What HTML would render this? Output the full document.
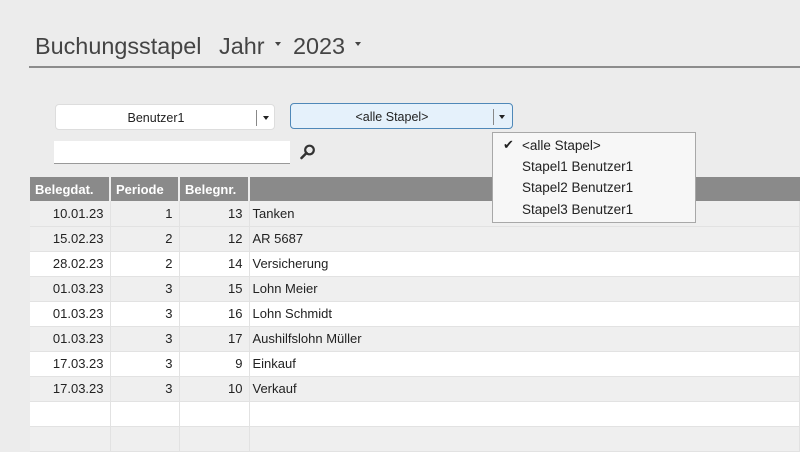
<!DOCTYPE html>
<html><head><meta charset="utf-8"><style>
*{margin:0;padding:0;box-sizing:border-box}
body{width:800px;height:449px;background:#ececec;position:relative;overflow:hidden;font-family:"Liberation Sans",sans-serif;color:#222}
.t{position:absolute;top:33px;font-size:23.4px;color:#444;white-space:nowrap}
.tri{display:inline-block;width:0;height:0;border-left:3.5px solid transparent;border-right:3.5px solid transparent;border-top:4px solid #444;vertical-align:middle;margin-left:10px;position:relative;top:-4px}
.hr{position:absolute;left:29px;right:0;top:66px;height:2px;background:#8c8c8c}
.cb{position:absolute;height:26px;border-radius:4px;font-size:12.5px;line-height:26px;text-align:center}
.cb .d{position:absolute;top:5px;width:1px;height:16px;background:#888}
.cb .a{position:absolute;top:11px;width:0;height:0;border-left:3.5px solid transparent;border-right:3.5px solid transparent;border-top:4px solid #222}
table{position:absolute;left:30px;top:177px;border-collapse:collapse;width:770px;font-size:13px;table-layout:fixed}
th{background:#8a8a8a;color:#fff;font-weight:bold;height:24px;text-align:left;padding:0 5px;border-right:2px solid #ececec;font-size:13px}
td{height:25px;border-right:1px solid #e2e2e2;border-bottom:1px solid #e2e2e2;padding:0 6px;white-space:nowrap}
td.r{text-align:right}
td:nth-child(4){padding-left:3px}
tr.g td{background:#efefef}
tr.w td{background:#fff}
.dd{position:absolute;left:492px;top:132px;width:204px;height:91px;background:#f7f7f7;border:1px solid #a8a8a8;font-size:13.5px}
.dd div{position:absolute;left:29px;white-space:nowrap}
</style></head><body>
<div class="t" style="left:35px">Buchungsstapel</div>
<div class="t" style="left:219px">Jahr<span class="tri"></span></div>
<div class="t" style="left:293px">2023<span class="tri"></span></div>
<div class="hr"></div>
<div class="cb" style="left:55px;top:104px;width:220px;background:#fff;border:1px solid #ddd"><span style="position:absolute;left:0;width:200px">Benutzer1</span><span class="d" style="left:200px"></span><span class="a" style="left:207px"></span></div>
<div class="cb" style="left:290px;top:103px;width:223px;background:#e5f1fb;border:1px solid #4f88b8"><span style="position:absolute;left:0;width:202px">&lt;alle Stapel&gt;</span><span class="d" style="left:202px"></span><span class="a" style="left:208px"></span></div>
<div style="position:absolute;left:54px;top:141px;width:236px;height:23px;background:#fff;border-bottom:1px solid #999"></div>
<svg style="position:absolute;left:299px;top:143px" width="18" height="18" viewBox="0 0 18 18"><circle cx="10.5" cy="7" r="4.3" fill="none" stroke="#333" stroke-width="2.2"/><line x1="7.5" y1="10" x2="2.5" y2="15" stroke="#333" stroke-width="2.6" stroke-linecap="round"/></svg>
<table>
<colgroup><col style="width:80px"><col style="width:69px"><col style="width:70px"><col></colgroup>
<tr><th>Belegdat.</th><th>Periode</th><th>Belegnr.</th><th style="border-right:0"></th></tr>
<tr class="g"><td class="r">10.01.23</td><td class="r">1</td><td class="r">13</td><td>Tanken</td></tr>
<tr class="g"><td class="r">15.02.23</td><td class="r">2</td><td class="r">12</td><td>AR 5687</td></tr>
<tr class="w"><td class="r">28.02.23</td><td class="r">2</td><td class="r">14</td><td>Versicherung</td></tr>
<tr class="g"><td class="r">01.03.23</td><td class="r">3</td><td class="r">15</td><td>Lohn Meier</td></tr>
<tr class="w"><td class="r">01.03.23</td><td class="r">3</td><td class="r">16</td><td>Lohn Schmidt</td></tr>
<tr class="g"><td class="r">01.03.23</td><td class="r">3</td><td class="r">17</td><td>Aushilfslohn Müller</td></tr>
<tr class="w"><td class="r">17.03.23</td><td class="r">3</td><td class="r">9</td><td>Einkauf</td></tr>
<tr class="g"><td class="r">17.03.23</td><td class="r">3</td><td class="r">10</td><td>Verkauf</td></tr>
<tr class="w"><td></td><td></td><td></td><td></td></tr>
<tr class="g"><td></td><td></td><td></td><td></td></tr>
</table>
<div style="position:absolute;left:679px;top:181px;color:#fff;font-weight:bold;font-size:13px">kt</div>
<div class="dd">
<span style="position:absolute;left:10px;top:4px;font-size:13px">✔</span>
<div style="top:5px">&lt;alle Stapel&gt;</div>
<div style="top:26px">Stapel1 Benutzer1</div>
<div style="top:47px">Stapel2 Benutzer1</div>
<div style="top:69px">Stapel3 Benutzer1</div>
</div>
</body></html>
